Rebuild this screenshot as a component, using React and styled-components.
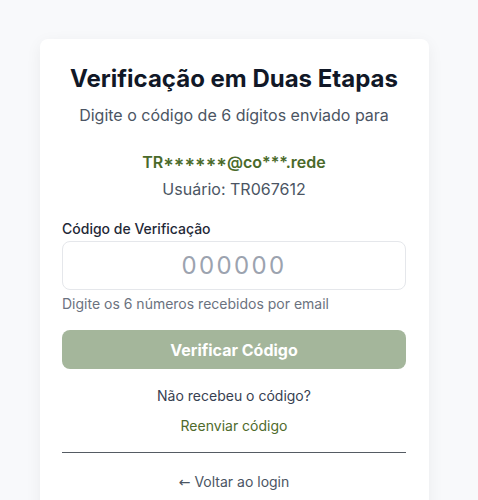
import React, { useState } from "react";
import styled, { createGlobalStyle } from "styled-components";

const GlobalStyle = createGlobalStyle`
  * {
    box-sizing: border-box;
  }
  body {
    margin: 0;
    background-color: #f8f9fb;
    font-family: Inter, "Noto Sans", sans-serif;
  }
`;

const TwoFactor = () => {
  const [code, setCode] = useState("");

  return (
    <Page>
      <GlobalStyle />
      <Card>
        <Title>Verificação em Duas Etapas</Title>
        <Subtitle>Digite o código de 6 dígitos enviado para</Subtitle>
        <Email>
          <CaseForm>TR******</CaseForm>@co***.rede
        </Email>
        <User>Usuário: TR067612</User>

        <Field>
          <Label htmlFor="code">Código de Verificação</Label>
          <CodeInput
            id="code"
            placeholder="000000"
            maxLength={6}
            value={code}
            onChange={(e) => setCode(e.target.value.replace(/\D/g, ""))}
          />
          <Hint>Digite os 6 números recebidos por email</Hint>
        </Field>

        <SubmitButton disabled={code.length < 6}>Verificar Código</SubmitButton>

        <Resend>
          <span>Não recebeu o código?</span>
          <LinkButton $tone="green">Reenviar código</LinkButton>
        </Resend>

        <Divider />

        <LinkButton>
          <Arrow>←</Arrow> Voltar ao login
        </LinkButton>
      </Card>
    </Page>
  );
};

const Page = styled.div`
  min-height: 100vh;
  padding: 39px 0 0 40px;
`;

const Card = styled.div`
  width: 389px;
  background-color: #ffffff;
  border-radius: 8px;
  box-shadow: 0 4px 16px rgba(0, 0, 0, 0.06);
  padding: 25px 23px 32px 22px;
  display: flex;
  flex-direction: column;
  align-items: center;
  text-align: center;
`;

const Title = styled.h1`
  margin: 0;
  font-size: 24px;
  font-weight: 700;
  color: #111827;
  line-height: 30px;
`;

const Subtitle = styled.p`
  margin: 9px 0 0;
  font-size: 16px;
  color: #4b5563;
  line-height: 24px;
`;

const Email = styled.p`
  margin: 23px 0 0;
  font-size: 16px;
  font-weight: 600;
  color: #4a6a2a;
  line-height: 24px;
`;

const CaseForm = styled.span`
  font-feature-settings: "case" 1;
`;

const User = styled.p`
  margin: 3px 0 0;
  font-size: 16px;
  color: #4b5563;
  line-height: 24px;
`;

const Field = styled.div`
  width: 100%;
  margin-top: 18px;
  display: flex;
  flex-direction: column;
  align-items: flex-start;
`;

const Label = styled.label`
  font-size: 14px;
  font-weight: 500;
  color: #1f2937;
  line-height: 20px;
`;

const CodeInput = styled.input`
  width: 100%;
  height: 49px;
  margin-top: 2px;
  border: 1px solid #e5e7eb;
  border-radius: 8px;
  text-align: center;
  font-family: inherit;
  font-size: 24px;
  letter-spacing: 0.1em;
  color: #111827;
  outline: none;

  &::placeholder {
    color: #9ca3af;
  }
`;

const Hint = styled.span`
  margin-top: 4px;
  font-size: 14px;
  color: #6b7280;
  line-height: 20px;
`;

const SubmitButton = styled.button`
  width: 100%;
  height: 39px;
  margin-top: 16px;
  border: none;
  border-radius: 8px;
  background-color: #a4b69b;
  color: #ffffff;
  font-family: inherit;
  font-size: 16px;
  font-weight: 700;
  cursor: pointer;
`;

const Resend = styled.div`
  margin-top: 17px;
  display: flex;
  flex-direction: column;
  align-items: center;
  gap: 10px;
  font-size: 14px;
  color: #374151;
  line-height: 20px;
`;

const LinkButton = styled.button`
  border: none;
  background: none;
  padding: 0;
  font-family: inherit;
  font-size: 14px;
  line-height: 20px;
  color: ${(p) => (p.$tone === "green" ? "#4f6b2c" : "#4b5563")};
  cursor: pointer;
`;

const Arrow = styled.span`
  font-family: "DejaVu Sans", sans-serif;
`;

const Divider = styled.hr`
  width: 100%;
  margin: 16px 0 19px;
  border: none;
  border-top: 1px solid #555b63;
`;

export default TwoFactor;
